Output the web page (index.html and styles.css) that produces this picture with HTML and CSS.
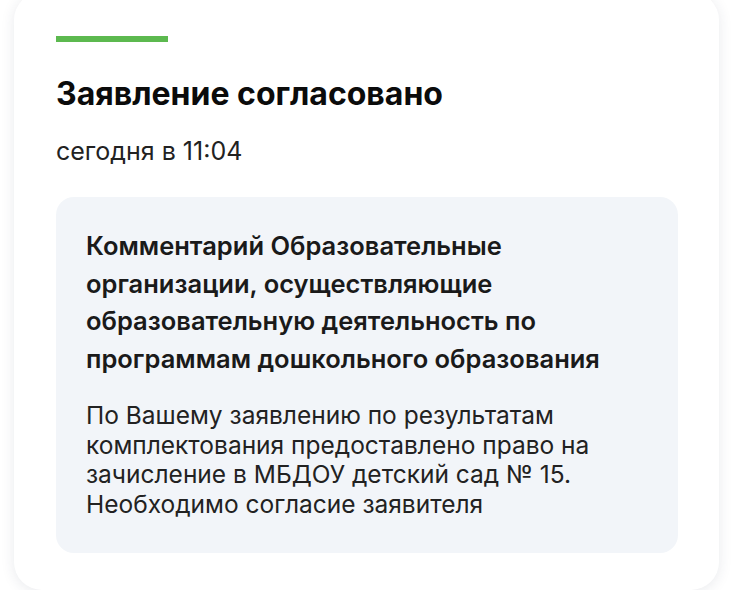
FILE: index.html
```html
<!DOCTYPE html>
<html lang="ru">
<head>
<meta charset="utf-8">
<link rel="stylesheet" href="styles.css">
</head>
<body>
<div class="card">
  <div class="status-bar"></div>
  <h1 class="title">Заявление согласовано</h1>
  <div class="date">сегодня в 11:04</div>
  <div class="comment">
    <div class="comment-title">Комментарий Образовательные организации, осуществляющие образовательную деятельность по программам дошкольного образования</div>
    <div class="comment-text">По Вашему заявлению по результатам комплектования предоставлено право на зачисление в МБДОУ детский сад № 15. Необходимо согласие заявителя</div>
  </div>
</div>
</body>
</html>
```
FILE: styles.css
```css
html, body {
  margin: 0;
  padding: 0;
  background: #ffffff;
}
body {
  font-family: Inter, "Noto Sans", sans-serif;
  color: #111111;
  overflow: hidden;
}
.card {
  margin: -8px 14px 0 14px;
  height: 598px;
  box-sizing: border-box;
  padding: 44px 41px 0 42px;
  background: #ffffff;
  border-radius: 28px;
  box-shadow: 0 2px 14px rgba(40, 50, 80, 0.10);
}
.status-bar {
  width: 112px;
  height: 6px;
  background: #5cb94f;
}
.title {
  margin: 32px 0 0 0;
  font-size: 32px;
  line-height: 40px;
  font-weight: 700;
  color: #0b0b0b;
}
.date {
  margin-top: 22px;
  font-size: 25px;
  line-height: 30px;
  color: #222222;
}
.comment {
  margin-top: 31px;
  background: #f2f5f9;
  border-radius: 18px;
  padding: 30px 30px 0 30px;
  height: 356px;
  box-sizing: border-box;
}
.comment-title {
  font-size: 25.5px;
  line-height: 37.5px;
  font-weight: 600;
  color: #1a1a1a;
}
.comment-text {
  margin-top: 24px;
  font-size: 24.5px;
  line-height: 29.5px;
  color: #222222;
}
```
